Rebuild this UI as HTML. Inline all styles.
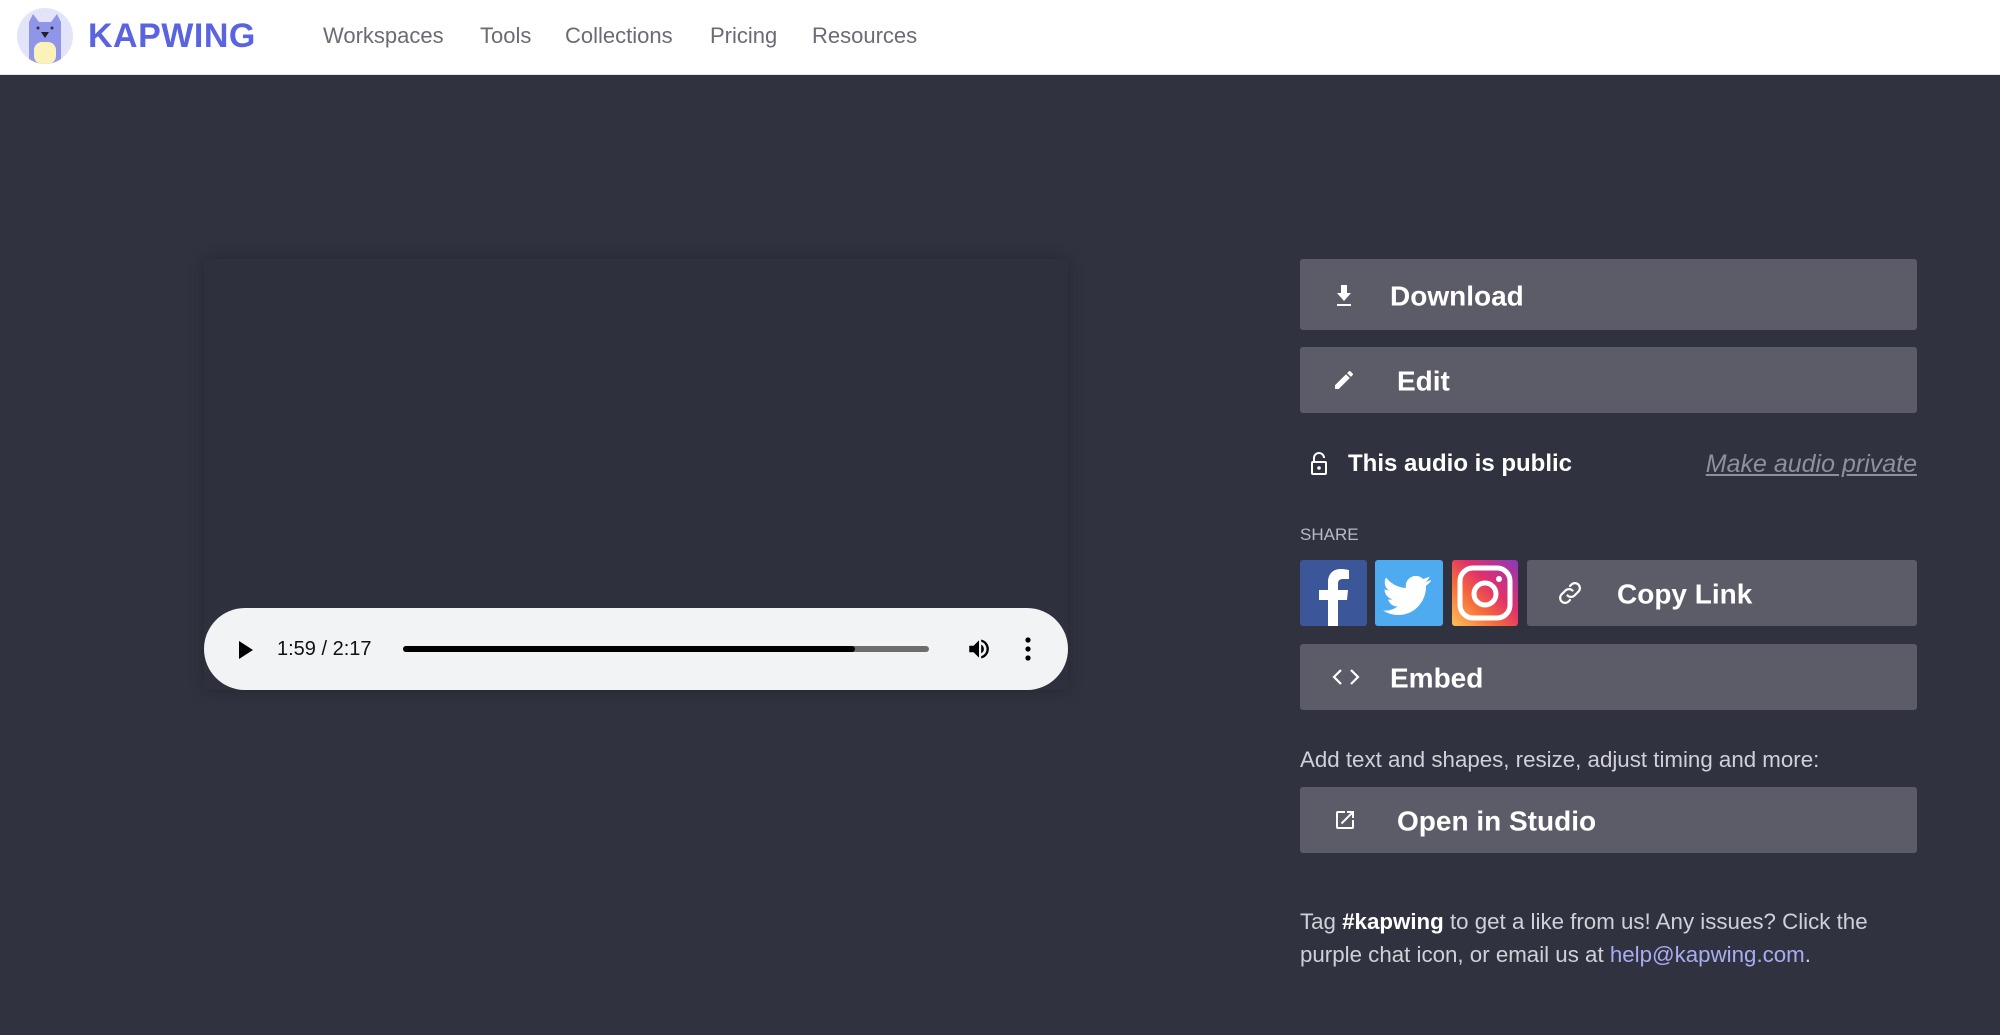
<!DOCTYPE html>
<html><head><meta charset="utf-8"><style>
*{box-sizing:border-box;margin:0;padding:0}
body{width:2000px;height:1035px;background:#30333f;font-family:"Liberation Sans",sans-serif;position:relative;overflow:hidden}
.hdr{position:absolute;left:0;top:0;width:2000px;height:75px;background:#fff;border-bottom:1px solid #e4e4ea}
.logo{position:absolute;left:17px;top:8px;width:56px;height:56px;border-radius:50%;background:#e3e4fa;overflow:hidden}
.brand{position:absolute;left:88px;top:17px;font-size:34px;font-weight:bold;color:#5a63e0;letter-spacing:0.5px}
.nav{position:absolute;top:23px;font-size:22px;color:#6b6b75}
.panel{position:absolute;left:204px;top:259px;width:864px;height:431px;background:#2e313d;box-shadow:0 0 14px rgba(0,0,0,.25)}
.audio{position:absolute;left:204px;top:608px;width:864px;height:82px;border-radius:41px;background:#f1f3f4}
.btn{position:absolute;left:1300px;width:617px;background:#5b5c68;border-radius:3px;color:#fff;font-size:28px;font-weight:bold}
.btn span{position:absolute;top:50%;transform:translateY(-46%)}
.btn svg{position:absolute;top:50%;transform:translateY(-50%)}
.txt{position:absolute;color:#d0d1d8;font-size:22px}
</style></head><body>
<div class="hdr">
 <div class="logo">
  <svg width="56" height="56" viewBox="0 0 56 56"><path d="M12 14 L16 6 L22 14 L34 14 L40 6 L44 14 L44 56 L12 56Z" fill="#8f96ea"/><rect x="17" y="34" width="22" height="22" rx="8" fill="#faf2b8"/><path d="M24 24 L32 24 L28 30Z" fill="#222"/><circle cx="21" cy="20" r="1.5" fill="#333"/><circle cx="35" cy="20" r="1.5" fill="#333"/></svg>
 </div>
 <div class="brand">KAPWING</div>
 <div class="nav" style="left:323px">Workspaces</div>
 <div class="nav" style="left:480px">Tools</div>
 <div class="nav" style="left:565px">Collections</div>
 <div class="nav" style="left:710px">Pricing</div>
 <div class="nav" style="left:812px">Resources</div>
</div>
<div class="panel"></div>
<div class="audio">
 <svg style="position:absolute;left:34px;top:32px" width="16" height="20"><path d="M1 1 L15 10 L1 19Z" fill="#000"/></svg>
 <div style="position:absolute;left:73px;top:30px;font-size:20px;color:#111">1:59 / 2:17</div>
 <div style="position:absolute;left:199px;top:38px;width:526px;height:6px;border-radius:3px;background:#6d6d6d"></div>
 <div style="position:absolute;left:199px;top:38px;width:452px;height:6px;border-radius:3px;background:#000"></div>
 <svg style="position:absolute;left:762px;top:28px" width="26" height="26" viewBox="0 0 24 24"><path d="M3 9v6h4l5 5V4L7 9H3zm13.5 3A4.5 4.5 0 0 0 14 8v8a4.5 4.5 0 0 0 2.5-4zM14 3.2v2.1a7 7 0 0 1 0 13.4v2.1a9 9 0 0 0 0-17.6z" fill="#000"/></svg>
 <svg style="position:absolute;left:820px;top:28px" width="8" height="26"><circle cx="4" cy="4" r="2.6"/><circle cx="4" cy="13" r="2.6"/><circle cx="4" cy="22" r="2.6"/></svg>
</div>

<div class="btn" style="top:259px;height:71px"><svg style="left:34px" width="20" height="24" viewBox="0 0 20 24"><path d="M7 2h6v8h4l-7 8-7-8h4z M3 21h14v2H3z" fill="#fff"/></svg><span style="left:90px">Download</span></div>
<div class="btn" style="top:347px;height:66px"><svg style="left:32px" width="24" height="24" viewBox="0 0 24 24"><path d="M3 17.25V21h3.75L17.8 9.94l-3.75-3.75L3 17.25zM20.7 7.04a1 1 0 0 0 0-1.41l-2.34-2.34a1 1 0 0 0-1.41 0l-1.83 1.83 3.75 3.75 1.83-1.83z" fill="#fff"/></svg><span style="left:97px">Edit</span></div>

<svg style="position:absolute;left:1310px;top:452px" width="18" height="24" viewBox="0 0 18 24"><path d="M4 10V6a5 5 0 0 1 10 0" stroke="#fff" stroke-width="2" fill="none"/><rect x="2" y="10" width="14" height="12" rx="1" stroke="#fff" stroke-width="2" fill="none"/><circle cx="9" cy="16" r="1.8" fill="#fff"/></svg>
<div class="txt" style="left:1348px;top:450px;font-size:24px;font-weight:bold;color:#fff">This audio is public</div>
<div class="txt" style="right:83px;top:450px;font-size:25px;font-style:italic;color:#8e909c;text-decoration:underline">Make audio private</div>
<div class="txt" style="left:1300px;top:525px;font-size:17px;color:#b8bac4">SHARE</div>

<svg style="position:absolute;left:1300px;top:560px" width="67" height="66" viewBox="0 0 67 66"><rect width="67" height="66" rx="3" fill="#3b5799"/><path d="M38 66V40h9l1-10H38v-6c0-3 1-5 5-5h6v-9c-1 0-4-1-8-1-8 0-13 5-13 13v8h-9v10h9v26z" fill="#fff"/></svg>
<svg style="position:absolute;left:1375px;top:560px" width="68" height="66" viewBox="0 0 68 66"><rect width="68" height="66" rx="3" fill="#4fabef"/><path d="M56 20c-2 1-4 1.5-6 2 2-1 4-3 4.5-5.5-2 1-4 2-6.5 2.5a10 10 0 0 0-17 9A28 28 0 0 1 11 17.5a10 10 0 0 0 3 13c-1.5 0-3-.5-4.5-1.2 0 5 3.5 9 8 10a10 10 0 0 1-4.5.2c1.3 4 5 7 9.5 7A20 20 0 0 1 8 50.5 28 28 0 0 0 23 55c18 0 28-15 28-28v-1.3c2-1.4 3.6-3 5-5z" fill="#fff"/></svg>
<svg style="position:absolute;left:1452px;top:560px" width="66" height="66" viewBox="0 0 66 66"><defs><linearGradient id="ig" x1="0" y1="1" x2="1" y2="0"><stop offset="0" stop-color="#fdc05a"/><stop offset=".35" stop-color="#f56a3a"/><stop offset=".6" stop-color="#e1306c"/><stop offset="1" stop-color="#8a3ab9"/></linearGradient></defs><rect width="66" height="66" rx="3" fill="url(#ig)"/><rect x="8" y="8" width="50" height="50" rx="13" fill="none" stroke="#fff" stroke-width="5"/><circle cx="33" cy="34" r="11" fill="none" stroke="#fff" stroke-width="5"/><circle cx="47" cy="19" r="3" fill="#fff"/></svg>
<div class="btn" style="top:560px;height:66px;left:1527px;width:390px"><svg style="left:28px" width="30" height="30" viewBox="0 0 24 24"><path d="M10 14a4 4 0 0 0 5.6 0l3.5-3.5a4 4 0 0 0-5.6-5.6L12 6.4M14 10a4 4 0 0 0-5.6 0l-3.5 3.5a4 4 0 0 0 5.6 5.6l1.5-1.5" stroke="#fff" stroke-width="1.8" fill="none" stroke-linecap="round"/></svg><span style="left:90px">Copy Link</span></div>
<div class="btn" style="top:644px;height:66px"><svg style="left:32px" width="28" height="20" viewBox="0 0 28 20"><path d="M9 3L2 10l7 7M19 3l7 7-7 7" stroke="#fff" stroke-width="2.2" fill="none"/></svg><span style="left:90px">Embed</span></div>

<div class="txt" style="left:1300px;top:747px;font-size:22.3px">Add text and shapes, resize, adjust timing and more:</div>
<div class="btn" style="top:787px;height:66px"><svg style="left:33px" width="24" height="24" viewBox="0 0 24 24"><path d="M19 19H5V5h7V3H5a2 2 0 0 0-2 2v14a2 2 0 0 0 2 2h14a2 2 0 0 0 2-2v-7h-2v7zM14 3v2h3.6l-9.8 9.8 1.4 1.4L19 6.4V10h2V3h-7z" fill="#fff"/></svg><span style="left:97px">Open in Studio</span></div>

<div class="txt" style="left:1300px;top:905px;line-height:33px;width:625px;font-size:22.3px">Tag <b style="color:#fff">#kapwing</b> to get a like from us! Any issues? Click the purple chat icon, or email us at <span style="color:#a9acf0">help@kapwing.com</span>.</div>
</body></html>
